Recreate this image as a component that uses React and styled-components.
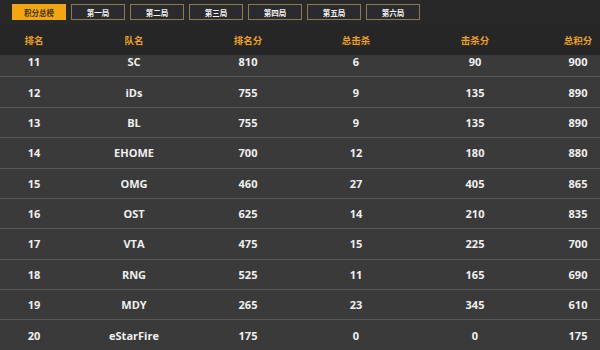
import React from "react";
import styled, { createGlobalStyle } from "styled-components";

const Global = createGlobalStyle`
  html, body { margin: 0; padding: 0; background: #3a3a3a; }
  body { font-family: "Open Sans", "Noto Sans CJK SC", sans-serif; }
`;

const Page = styled.div`
  width: 600px;
  height: 350px;
  overflow: hidden;
  display: flex;
  flex-direction: column;
  background: #3a3a3a;
`;

const TabBar = styled.div`
  height: 25px;
  box-sizing: border-box;
  padding: 4px 0 0 12px;
  display: flex;
  gap: 5px;
  background: #282828;
`;

const Tab = styled.div`
  width: 54px;
  height: 16px;
  box-sizing: border-box;
  display: flex;
  align-items: center;
  justify-content: center;
  font-family: "Noto Sans CJK SC", sans-serif;
  font-size: 7.5px;
  font-weight: 700;
  color: ${(p) => (p.$active ? "#3a2a08" : "#f2f2f2")};
  background: ${(p) => (p.$active ? "#f2a712" : "#2b2b2f")};
  border: 1px solid ${(p) => (p.$active ? "#f2a712" : "#8a7b54")};
`;

const Grid = styled.div`
  display: grid;
  grid-template-columns: 68px 132px 96px 120px 118px 1fr;
  align-items: center;
`;

const Header = styled(Grid)`
  height: 30px;
  background: #262626;
`;

const HeadCell = styled.div`
  text-align: center;
  font-family: "Noto Sans CJK SC", sans-serif;
  font-size: 9.5px;
  font-weight: 700;
  color: #eea21c;
  padding-left: ${(p) => (p.$last ? "22px" : "0")};
`;

const Body = styled.div`
  flex: 1;
  overflow: hidden;
`;

const Rows = styled.div`
  margin-top: -8px;
`;

const Row = styled(Grid)`
  height: 30.375px;
  box-sizing: border-box;
  border-bottom: 1px solid #565656;
  background: #3a3a3a;
`;

const Cell = styled.div`
  text-align: center;
  font-size: 11px;
  font-weight: 700;
  color: #f0f0f0;
  padding-left: ${(p) => (p.$last ? "22px" : "0")};
`;

const tabs = ["积分总榜", "第一局", "第二局", "第三局", "第四局", "第五局", "第六局"];
const heads = ["排名", "队名", "排名分", "总击杀", "击杀分", "总积分"];
const data = [
  [11, "SC", 810, 6, 90, 900],
  [12, "iDs", 755, 9, 135, 890],
  [13, "BL", 755, 9, 135, 890],
  [14, "EHOME", 700, 12, 180, 880],
  [15, "OMG", 460, 27, 405, 865],
  [16, "OST", 625, 14, 210, 835],
  [17, "VTA", 475, 15, 225, 700],
  [18, "RNG", 525, 11, 165, 690],
  [19, "MDY", 265, 23, 345, 610],
  [20, "eStarFire", 175, 0, 0, 175],
];

export default function App() {
  return (
    <Page>
      <Global />
      <TabBar>
        {tabs.map((t, i) => (
          <Tab key={t} $active={i === 0}>
            {t}
          </Tab>
        ))}
      </TabBar>
      <Header>
        {heads.map((h, i) => (
          <HeadCell key={h} $last={i === 5}>
            {h}
          </HeadCell>
        ))}
      </Header>
      <Body>
        <Rows>
          {data.map((r) => (
            <Row key={r[0]}>
              {r.map((v, i) => (
                <Cell key={i} $last={i === 5}>
                  {v}
                </Cell>
              ))}
            </Row>
          ))}
        </Rows>
      </Body>
    </Page>
  );
}
